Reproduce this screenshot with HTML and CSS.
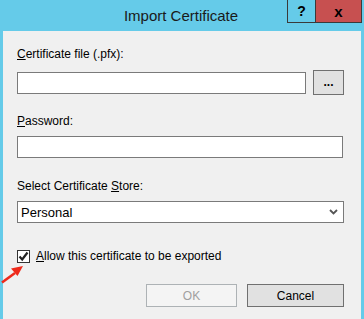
FILE: index.html
```html
<!DOCTYPE html>
<html lang="en">
<head>
<meta charset="UTF-8">
<meta name="viewport" content="width=device-width, initial-scale=1.0">
<title>Import Certificate</title>
<link rel="stylesheet" href="styles.css">
</head>
<body>

<div class="window">
    <div class="titlebar">
        <div class="title">Import Certificate</div>
        <div class="caption-buttons">
            <button class="cap-btn help">?</button>
            <button class="cap-btn close">x</button>
        </div>
    </div>

    <div class="content">
        <label class="field-label"><u>C</u>ertificate file (.pfx):</label>
        <div class="file-row">
            <input type="text" class="text-input file-input">
            <button class="browse-btn">...</button>
        </div>

        <label class="field-label pass-label"><u>P</u>assword:</label>
        <input type="password" class="text-input pass-input">

        <label class="field-label store-label">Select Certificate <u>S</u>tore:</label>
        <div class="select-box">
            <span>Personal</span>
            <svg class="chevron" width="9" height="6" viewBox="0 0 9 6">
                <path d="M1 1 L4.5 4.5 L8 1" fill="none" stroke="#555" stroke-width="1.8"/>
            </svg>
        </div>

        <div class="check-row">
            <span class="checkbox">
                <svg width="11" height="11" viewBox="0 0 11 11">
                    <path d="M1.5 5.5 L4.2 8.5 L9.5 1.5" fill="none" stroke="#222" stroke-width="2.2"/>
                </svg>
            </span>
            <span class="check-text"><u>A</u>llow this certificate to be exported</span>
        </div>

        <div class="dialog-buttons">
            <button class="dlg-btn ok" disabled>OK</button>
            <button class="dlg-btn cancel">Cancel</button>
        </div>
    </div>

    <!-- flecha roja de la captura -->
    <svg class="arrow" width="26" height="22" viewBox="0 0 26 22">
        <path d="M1 20.5 L14 11" stroke="#ee2a1b" stroke-width="2.6" fill="none"/>
        <path d="M22 4 L10 6.5 L16.5 14 Z" fill="#ee2a1b"/>
    </svg>
</div>

</body>
</html>
```

FILE: styles.css
```css
html, body {
    margin: 0;
    padding: 0;
}
body {
    font-family: 'Liberation Sans', Arial, sans-serif;
    font-size: 12px;
    color: #000;
}
.window {
    position: relative;
    width: 364px;
    height: 319px;
    background-color: #65cbe9;
    display: flex;
    flex-direction: column;
    box-sizing: border-box;
    padding: 0 3px 0 3px;
}
.titlebar {
    height: 31px;
    position: relative;
    display: flex;
    justify-content: center;
}
.title {
    font-size: 15px;
    line-height: 31px;
    color: #1a1a1a;
    margin-right: 2px;
}
.caption-buttons {
    position: absolute;
    top: 0;
    right: -1px;
    display: flex;
}
.cap-btn {
    height: 23px;
    margin: 0;
    padding: 0;
    border: 1px solid #3a3a3a;
    border-top: none;
    font-family: 'Liberation Sans', Arial, sans-serif;
    font-weight: bold;
    font-size: 14px;
    color: #000;
}
.help {
    width: 29px;
    background-color: #65cbe9;
}
.close {
    width: 46px;
    background-color: #c75050;
    border-left: none;
    font-size: 15px;
}
.content {
    flex: 1;
    background-color: #f0f0f0;
    padding: 16px 17px 0 14px;
    display: flex;
    flex-direction: column;
    align-items: flex-start;
}
.field-label {
    line-height: 15px;
    display: block;
}
.file-row {
    margin-top: 8px;
    display: flex;
    align-items: center;
    gap: 7px;
    width: 328px;
}
.text-input {
    box-sizing: border-box;
    height: 22px;
    border: 1px solid #7a7a7a;
    background: #fff;
    margin: 0;
    padding: 0 4px;
    outline: none;
}
.file-input {
    width: 289px;
}
.browse-btn {
    box-sizing: border-box;
    width: 31px;
    height: 25px;
    margin: 0;
    padding: 0 0 6px 0;
    border: 1px solid #707070;
    background-color: #e1e1e1;
    font-family: 'Liberation Sans', Arial, sans-serif;
    font-size: 12px;
    font-weight: bold;
    line-height: 1;
    display: flex;
    align-items: flex-end;
    justify-content: center;
}
.pass-label {
    margin-top: 19px;
}
.pass-input {
    margin-top: 7px;
    width: 326px;
}
.store-label {
    margin-top: 21px;
}
.select-box {
    margin-top: 7px;
    box-sizing: border-box;
    width: 327px;
    height: 22px;
    border: 1px solid #7a7a7a;
    background: #fff;
    display: flex;
    align-items: center;
    justify-content: space-between;
    padding: 0 5px 0 3px;
    font-size: 13px;
}
.check-row {
    margin-top: 26px;
    display: flex;
    align-items: center;
    gap: 6px;
}
.checkbox {
    box-sizing: border-box;
    width: 13px;
    height: 13px;
    border: 1px solid #333;
    background: #fff;
    display: flex;
    align-items: center;
    justify-content: center;
}
.check-text {
    font-size: 12px;
}
.dialog-buttons {
    margin-top: 21px;
    align-self: flex-end;
    display: flex;
    gap: 10px;
}
.dlg-btn {
    box-sizing: border-box;
    height: 23px;
    margin: 0;
    padding: 0;
    font-family: 'Liberation Sans', Arial, sans-serif;
    font-size: 12px;
}
.ok {
    width: 91px;
    background-color: #f4f4f4;
    border: 1px solid #adb2b5;
    color: #a0a0a0;
}
.cancel {
    width: 97px;
    background-color: #e1e1e1;
    border: 1px solid #707070;
    color: #000;
}
.arrow {
    position: absolute;
    left: 1px;
    top: 262px;
}
```
